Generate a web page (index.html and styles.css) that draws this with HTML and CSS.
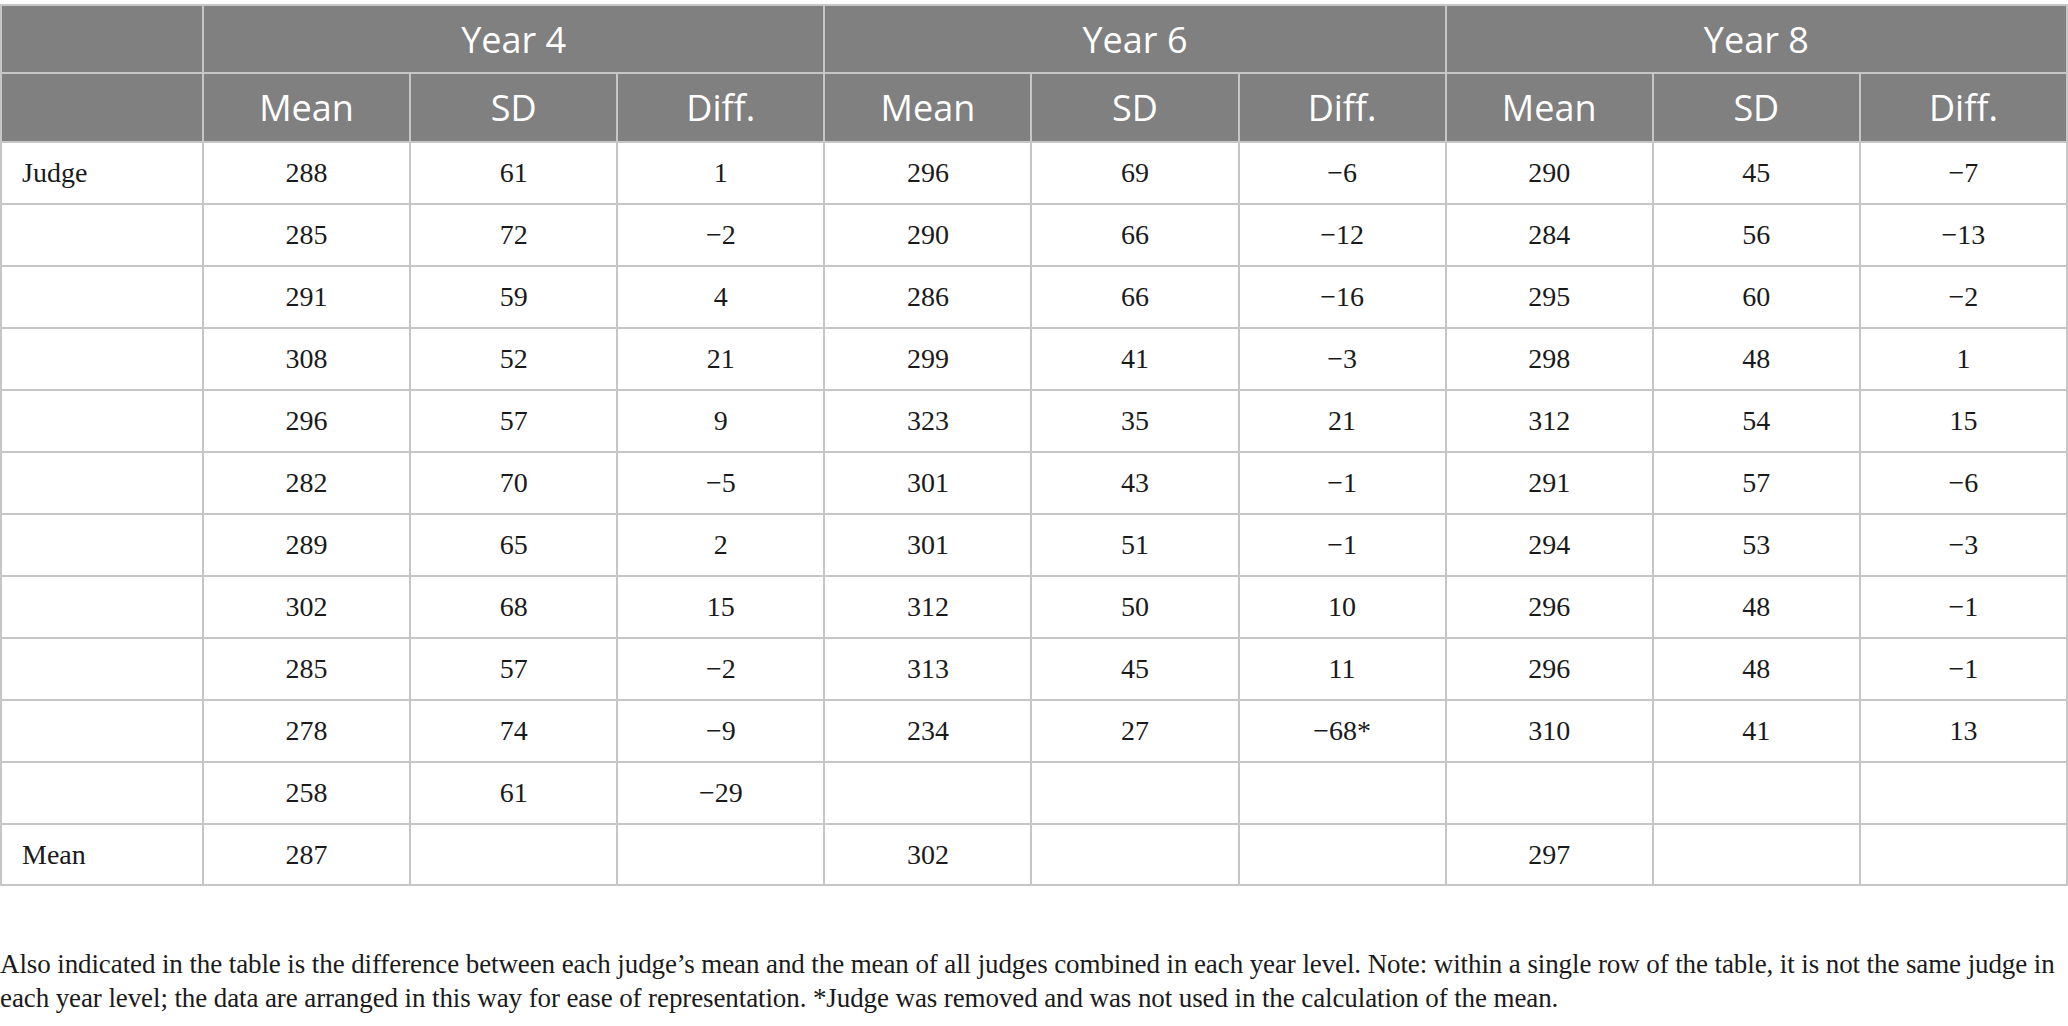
FILE: index.html
```html
<!DOCTYPE html>
<html>
<head>
<meta charset="utf-8">
<link rel="stylesheet" href="styles.css">
</head>
<body>
<table class="data">
  <colgroup>
    <col class="c-label">
    <col><col><col><col><col><col><col><col><col>
  </colgroup>
  <thead>
    <tr class="h1">
      <th></th>
      <th colspan="3">Year 4</th>
      <th colspan="3">Year 6</th>
      <th colspan="3">Year 8</th>
    </tr>
    <tr class="h2">
      <th></th>
      <th>Mean</th><th>SD</th><th>Diff.</th>
      <th>Mean</th><th>SD</th><th>Diff.</th>
      <th>Mean</th><th>SD</th><th>Diff.</th>
    </tr>
  </thead>
  <tbody>
    <tr><td class="lbl">Judge</td><td>288</td><td>61</td><td>1</td><td>296</td><td>69</td><td>−6</td><td>290</td><td>45</td><td>−7</td></tr>
    <tr><td class="lbl"></td><td>285</td><td>72</td><td>−2</td><td>290</td><td>66</td><td>−12</td><td>284</td><td>56</td><td>−13</td></tr>
    <tr><td class="lbl"></td><td>291</td><td>59</td><td>4</td><td>286</td><td>66</td><td>−16</td><td>295</td><td>60</td><td>−2</td></tr>
    <tr><td class="lbl"></td><td>308</td><td>52</td><td>21</td><td>299</td><td>41</td><td>−3</td><td>298</td><td>48</td><td>1</td></tr>
    <tr><td class="lbl"></td><td>296</td><td>57</td><td>9</td><td>323</td><td>35</td><td>21</td><td>312</td><td>54</td><td>15</td></tr>
    <tr><td class="lbl"></td><td>282</td><td>70</td><td>−5</td><td>301</td><td>43</td><td>−1</td><td>291</td><td>57</td><td>−6</td></tr>
    <tr><td class="lbl"></td><td>289</td><td>65</td><td>2</td><td>301</td><td>51</td><td>−1</td><td>294</td><td>53</td><td>−3</td></tr>
    <tr><td class="lbl"></td><td>302</td><td>68</td><td>15</td><td>312</td><td>50</td><td>10</td><td>296</td><td>48</td><td>−1</td></tr>
    <tr><td class="lbl"></td><td>285</td><td>57</td><td>−2</td><td>313</td><td>45</td><td>11</td><td>296</td><td>48</td><td>−1</td></tr>
    <tr><td class="lbl"></td><td>278</td><td>74</td><td>−9</td><td>234</td><td>27</td><td>−68*</td><td>310</td><td>41</td><td>13</td></tr>
    <tr><td class="lbl"></td><td>258</td><td>61</td><td>−29</td><td></td><td></td><td></td><td></td><td></td><td></td></tr>
    <tr class="last"><td class="lbl">Mean</td><td>287</td><td></td><td></td><td>302</td><td></td><td></td><td>297</td><td></td><td></td></tr>
  </tbody>
</table>
<p class="caption">Also indicated in the table is the difference between each judge’s mean and the mean of all judges combined in each year level. Note: within a single row of the table, it is not the same judge in each year level; the data are arranged in this way for ease of representation. *Judge was removed and was not used in the calculation of the mean.</p>
</body>
</html>
```
FILE: styles.css
```css
html, body {
  margin: 0;
  padding: 0;
  background: #ffffff;
}

body {
  width: 2068px;
  font-family: "Liberation Serif", "Times New Roman", serif;
  color: #1a1a1a;
}

.data {
  margin-top: 4px;
  width: 2068px;
  table-layout: fixed;
  border-collapse: collapse;
}

.c-label {
  width: 202px;
}

.data th,
.data td {
  border: 2px solid #c6c6c6;
  padding: 0;
  text-align: center;
  vertical-align: middle;
}

.data th {
  background: #7f807f;
  color: #ffffff;
  font-family: "Open Sans", "Noto Sans", sans-serif;
  font-weight: 400;
  font-size: 36px;
}

.h1 { height: 68px; }
.h2 { height: 69px; }

.data td {
  font-size: 28px;
  height: 60px;
}

.data tr.last td { height: 59px; }

.data td.lbl {
  text-align: left;
  padding-left: 20px;
}

.caption {
  margin: 61px 0 0 0;
  font-size: 27px;
  letter-spacing: -0.1px;
  line-height: 34px;
  color: #1a1a1a;
}
```
